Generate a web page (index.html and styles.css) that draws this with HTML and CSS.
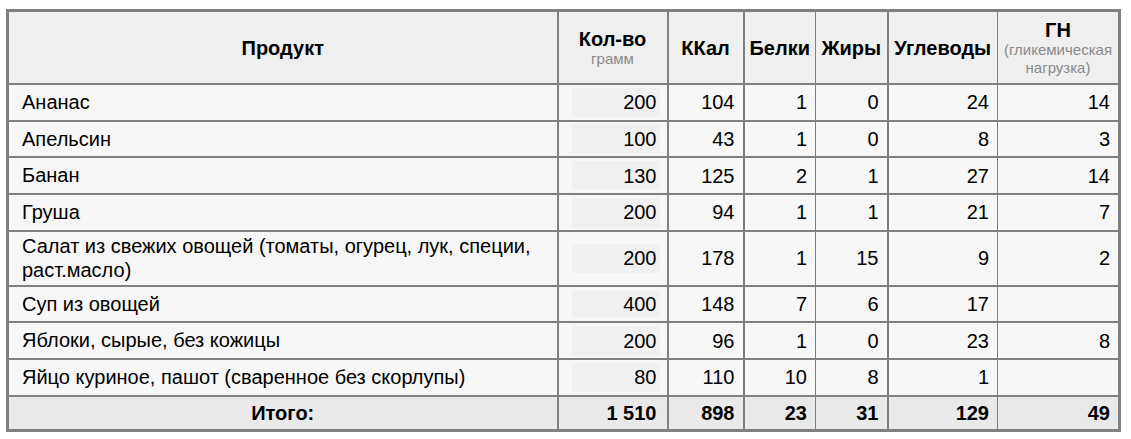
FILE: index.html
```html
<!DOCTYPE html>
<html lang="ru">
<head>
<meta charset="utf-8">
<title>Таблица калорийности</title>
<link rel="stylesheet" href="styles.css">
</head>
<body>
<table class="nutri">
  <colgroup>
    <col class="c-prod">
    <col class="c-qty">
    <col class="c-kcal">
    <col class="c-prot">
    <col class="c-fat">
    <col class="c-carb">
    <col class="c-gn">
  </colgroup>
  <thead>
    <tr>
      <th class="prod">Продукт</th>
      <th class="qty">Кол-во<span class="sub">грамм</span></th>
      <th class="kcal">ККал</th>
      <th class="prot">Белки</th>
      <th class="fat">Жиры</th>
      <th class="carb">Углеводы</th>
      <th class="gn">ГН<span class="sub">(гликемическая нагрузка)</span></th>
    </tr>
  </thead>
  <tbody>
    <tr>
      <td class="prod">Ананас</td>
      <td class="qty"><div class="qbox">200</div></td>
      <td class="kcal">104</td><td class="prot">1</td><td class="fat">0</td><td class="carb">24</td><td class="gn">14</td>
    </tr>
    <tr>
      <td class="prod">Апельсин</td>
      <td class="qty"><div class="qbox">100</div></td>
      <td class="kcal">43</td><td class="prot">1</td><td class="fat">0</td><td class="carb">8</td><td class="gn">3</td>
    </tr>
    <tr>
      <td class="prod">Банан</td>
      <td class="qty"><div class="qbox">130</div></td>
      <td class="kcal">125</td><td class="prot">2</td><td class="fat">1</td><td class="carb">27</td><td class="gn">14</td>
    </tr>
    <tr>
      <td class="prod">Груша</td>
      <td class="qty"><div class="qbox">200</div></td>
      <td class="kcal">94</td><td class="prot">1</td><td class="fat">1</td><td class="carb">21</td><td class="gn">7</td>
    </tr>
    <tr>
      <td class="prod">Салат из свежих овощей (томаты, огурец, лук, специи, раст.масло)</td>
      <td class="qty"><div class="qbox">200</div></td>
      <td class="kcal">178</td><td class="prot">1</td><td class="fat">15</td><td class="carb">9</td><td class="gn">2</td>
    </tr>
    <tr>
      <td class="prod">Суп из овощей</td>
      <td class="qty"><div class="qbox">400</div></td>
      <td class="kcal">148</td><td class="prot">7</td><td class="fat">6</td><td class="carb">17</td><td class="gn"></td>
    </tr>
    <tr>
      <td class="prod">Яблоки, сырые, без кожицы</td>
      <td class="qty"><div class="qbox">200</div></td>
      <td class="kcal">96</td><td class="prot">1</td><td class="fat">0</td><td class="carb">23</td><td class="gn">8</td>
    </tr>
    <tr>
      <td class="prod">Яйцо куриное, пашот (сваренное без скорлупы)</td>
      <td class="qty"><div class="qbox">80</div></td>
      <td class="kcal">110</td><td class="prot">10</td><td class="fat">8</td><td class="carb">1</td><td class="gn"></td>
    </tr>
  </tbody>
  <tfoot>
    <tr>
      <td class="prod total-label">Итого:</td>
      <td class="qty total-qty">1 510</td>
      <td class="kcal">898</td><td class="prot">23</td><td class="fat">31</td><td class="carb">129</td><td class="gn">49</td>
    </tr>
  </tfoot>
</table>
</body>
</html>
```

FILE: styles.css
```css
html, body {
  margin: 0;
  padding: 0;
  background: #ffffff;
}

body {
  padding: 9px 0 0 6px;
  font-family: "Liberation Sans", Arial, sans-serif;
  color: #000;
}

.nutri {
  border-collapse: collapse;
  table-layout: fixed;
  width: 1112px;
  border: 3px solid #808080;
  font-size: 20px;
  line-height: 24px;
}

.c-prod { width: 550px; }
.c-qty  { width: 110px; }
.c-kcal { width: 76px; }
.c-prot { width: 72px; }
.c-fat  { width: 72px; }
.c-carb { width: 110px; }
.c-gn   { width: 122px; }

.nutri th,
.nutri td {
  border: 2px solid #808080;
  vertical-align: middle;
}

.nutri .fat,
.nutri .gn {
  border-left-width: 1px;
}

.nutri .prot,
.nutri .carb {
  border-right-width: 1px;
}

.nutri th {
  background: #efefef;
  font-weight: bold;
  text-align: center;
  height: 71px;
  padding: 0 2px;
  line-height: 22px;
}

.nutri th .sub {
  display: block;
  font-weight: normal;
  font-size: 15px;
  line-height: 18px;
  color: #8a8a8a;
}

.nutri tbody td {
  background: #f7f7f7;
  padding: 3px 8px;
  text-align: right;
}

.nutri tbody td.prod {
  text-align: left;
  padding: 2px 3px 3px 13px;
}

.nutri tbody td.qty {
  padding: 3px 7px 3px 13px;
}

.qbox {
  background: #f0f0f0;
  padding: 2.35px 3px 2.35px 4px;
  text-align: right;
}

.nutri tfoot td {
  background: #e9e9e9;
  font-weight: bold;
  text-align: right;
  padding: 3px 8px;
  height: 26px;
}

.nutri tfoot td.total-label {
  text-align: center;
}

.nutri tfoot td.total-qty {
  padding-right: 10px;
}
```
